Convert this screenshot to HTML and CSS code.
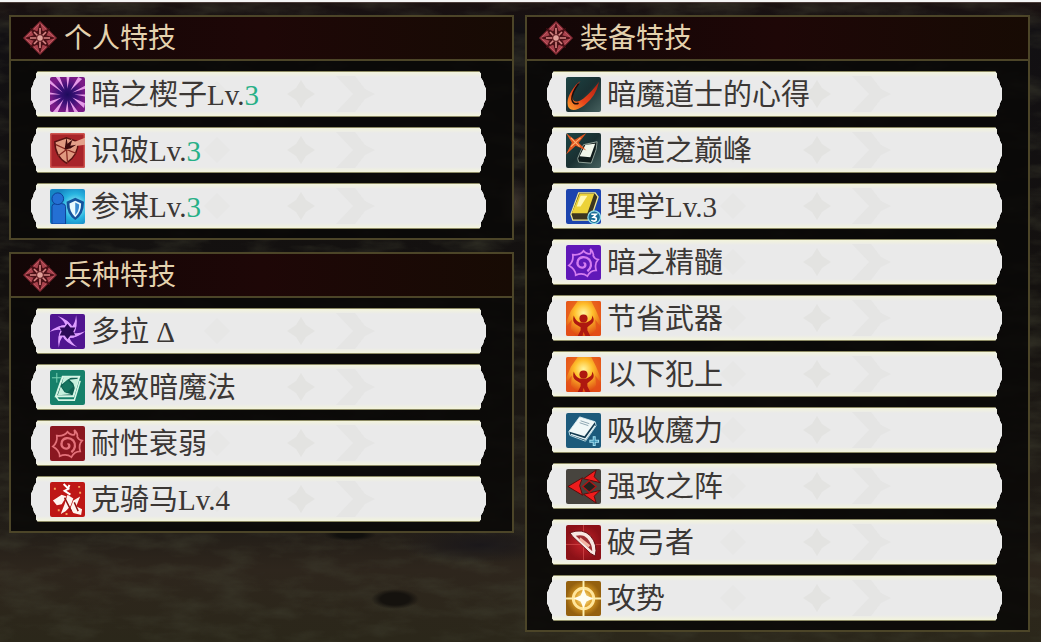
FILE: index.html
```html
<!DOCTYPE html>
<html lang="zh-CN">
<head>
    <meta charset="UTF-8">
    <meta name="viewport" content="width=device-width, initial-scale=1.0">
    <title>特技</title>
    <link rel="stylesheet" href="styles.css">
</head>
<body>

<!-- shared icons -->
<svg class="sprite" aria-hidden="true">
    <defs>
        <radialGradient id="g-fire" cx="50%" cy="35%" r="65%">
            <stop offset="0" stop-color="#fff6a0"/>
            <stop offset="0.4" stop-color="#ffc02c"/>
            <stop offset="1" stop-color="#df4a12"/>
        </radialGradient>
        <radialGradient id="g-burst">
            <stop offset="0" stop-color="#1d0c5c"/>
            <stop offset="0.5" stop-color="#3c1178"/>
            <stop offset="1" stop-color="#7a1a86"/>
        </radialGradient>
        <linearGradient id="g-slash" x1="1" y1="0" x2="0" y2="1">
            <stop offset="0" stop-color="#a81d12"/>
            <stop offset="0.6" stop-color="#e8431a"/>
            <stop offset="1" stop-color="#ffa52e"/>
        </linearGradient>
        <radialGradient id="g-gold">
            <stop offset="0" stop-color="#fff3b0"/>
            <stop offset="0.5" stop-color="#d99a22"/>
            <stop offset="1" stop-color="#94600f"/>
        </radialGradient>
        <linearGradient id="g-teal" x1="0" y1="0" x2="1" y2="1">
            <stop offset="0" stop-color="#1c4444"/>
            <stop offset="0.5" stop-color="#1a3032"/>
            <stop offset="1" stop-color="#46605e"/>
        </linearGradient>
        <radialGradient id="g-aura" cx="72%" cy="50%" r="60%">
            <stop offset="0" stop-color="#b8fbff"/>
            <stop offset="0.6" stop-color="#28b4e0"/>
            <stop offset="1" stop-color="#1586c4"/>
        </radialGradient>
        <radialGradient id="g-red">
            <stop offset="0" stop-color="#c8242c"/>
            <stop offset="1" stop-color="#8c1218"/>
        </radialGradient>
    </defs>
    <symbol id="emblem" viewBox="0 0 34 34">
        <path d="M17 0 34 17 17 34 0 17Z" fill="#8a2c36"/>
        <path d="M17 2 32 17 17 32 2 17Z" fill="#a8424c" stroke="#bd5862"/>
        <path d="M17 5 19 12 25 9 22 15 29 17 22 19 25 25 19 22 17 29 15 22 9 25 12 19 5 17 12 15 9 9 15 12Z" fill="#4a1016" stroke="#4a1016" stroke-width="2"/>
        <path d="M17 7v20M7 17h20M11 11l12 12M23 11 11 23" stroke="#d88684" stroke-width="1.6"/>
        <circle cx="17" cy="17" r="3.4" fill="#e2a09a" stroke="#5c161c"/>
    </symbol>
    <symbol id="fire" viewBox="0 0 36 36">
        <path d="M0 0h36v36H0z" fill="url(#g-fire)"/>
        <path d="M0 0h12L5 10 0 22ZM36 0H26l5 10 5 12ZM0 36V27l6-8-1 10 5 7ZM36 36V27l-6-8 1 10-5 7Z" fill="#e4501a" opacity=".75"/>
        <path d="M8 15Q6 21 10 24L15 27V30L12 36H17L18 32 20 36H25L22 30V27L27 23Q30 20 27 15 27 20 23 21L21 22H14Q10 21 8 15Z" fill="#ae1810"/>
        <circle cx="18" cy="18" r="4.2" fill="#ae1810"/>
    </symbol>
    <symbol id="spiral" viewBox="0 0 36 36">
        <path d="M18 6Q21 10 25 9 26 7 25 4 29 8 28 11 29 14 33 15 29 19 31 26 25 26 22 32 17 28 10 31 10 25 3 21 8 17 7 10 14 11 18 6Z" fill="none" stroke="currentColor" stroke-width="1.8"/>
        <path d="M18 19c2-1 3 3 0 4-4 1-7-2-6-6 1-5 8-6 12-2 3 4 2 9-2 12" fill="none" stroke="currentColor" stroke-width="2.4"/>
    </symbol>
</svg>

<main class="skills">
    <div class="column">
        <section class="panel">
            <h2 class="panel-title"><svg class="emblem"><use href="#emblem"/></svg><span>个人特技</span></h2>
            <ul class="skill-list">
                <li class="skill">
                    <svg class="icon" viewBox="0 0 36 36">
                        <path d="M0 0h36v36H0z" fill="url(#g-burst)"/>
                        <path d="M18 12 17 0h3ZM21 14 29 0l4 2ZM23 16 36 9v3ZM25 18 36 18v2ZM23 21 36 27l-1 5ZM20 24 29 36h-4ZM18 24 19 36h-3ZM14 23 8 36H3ZM12 21 0 29v-4ZM11 18 0 18v-2ZM13 16 0 7V3ZM15 13 6 0h4Z" fill="#e69be8"/>
                    </svg>
                    <span>暗之楔子Lv.<em>3</em></span>
                </li>
                <li class="skill">
                    <svg class="icon" viewBox="0 0 36 36">
                        <path d="M0 0h36v36H0z" fill="#a8242a"/>
                        <path d="M0 0h36v36H0z" fill="none" stroke="#cf5550" stroke-width="3"/>
                        <path d="M17 5 29 9Q29 23 17 31 5 24 5 9Z" fill="#e09a80" stroke="#5a1212" stroke-width="1.5"/>
                        <path d="M17 17 6 12M17 17 8 24M17 17 18 31M17 17 27 21" stroke="#84271f" stroke-width="1.3"/>
                        <path d="M36 5 23 10 22 6 17 17 24 16 23 14 36 12Z" fill="#e4a08a"/>
                        <path d="M17 4 15 17 21 16 27 12 21 13 23 7 18 11Z" fill="#3c0a0c"/>
                    </svg>
                    <span>识破Lv.<em>3</em></span>
                </li>
                <li class="skill">
                    <svg class="icon" viewBox="0 0 36 36">
                        <path d="M0 0h36v36H0z" fill="url(#g-aura)"/>
                        <path d="M2 36V18q0-3 4-3h6q4 0 4 3v18Z" fill="#2470d4" stroke="#0d3f94"/>
                        <circle cx="8" cy="10" r="6" fill="#2470d4" stroke="#0d3f94"/>
                        <path d="M26 9 35 13Q35 26 26 32 17 26 17 13Z" fill="#14539c"/>
                        <path d="M26 12 32 15Q32 24 26 29 20 24 20 15Z" fill="#e8fbff"/>
                        <path d="M26 14 30 16Q30 23 26 27Z" fill="#3a8cd2"/>
                    </svg>
                    <span>参谋Lv.<em>3</em></span>
                </li>
            </ul>
        </section>

        <section class="panel">
            <h2 class="panel-title"><svg class="emblem"><use href="#emblem"/></svg><span>兵种特技</span></h2>
            <ul class="skill-list">
                <li class="skill">
                    <svg class="icon" viewBox="0 0 36 36">
                        <path d="M0 0h36v36H0z" fill="#501590"/>
                        <g fill="#dd9dff">
                            <path id="blade" d="M24 15Q20 6 8 2 15 7 16 12 10 11 5 16 13 13 19 16Z"/>
                            <use href="#blade" transform="rotate(60 18 18)"/>
                            <use href="#blade" transform="rotate(120 18 18)"/>
                            <use href="#blade" transform="rotate(180 18 18)"/>
                            <use href="#blade" transform="rotate(240 18 18)"/>
                            <use href="#blade" transform="rotate(300 18 18)"/>
                        </g>
                        <path d="M18 10 21 14 26 14 24 18 26 22 21 22 18 26 15 22 10 22 12 18 10 14 15 14Z" fill="#2c0a58"/>
                    </svg>
                    <span>多拉 Δ</span>
                </li>
                <li class="skill">
                    <svg class="icon" viewBox="0 0 36 36">
                        <path d="M0 0h36v36H0z" fill="#16806a"/>
                        <path d="M13 7 30 7 24 27 6 27Z" fill="#0f5f50" stroke="#d8f6e6" stroke-width="2"/>
                        <path d="M6 27 9 31 25 31 31 11" fill="none" stroke="#d8f6e6" stroke-width="1.6"/>
                        <path d="M14 7 23 7 18 10 12 15ZM29 9 26 20 24 14 20 10ZM8 26 11 17 15 23 22 25Z" fill="#c6f0dd"/>
                        <path d="M18 10 24 17 17 24 12 17Z" fill="#16745f"/>
                        <path d="M7 3v10M2 8h10" stroke="#7fd6b8"/>
                    </svg>
                    <span>极致暗魔法</span>
                </li>
                <li class="skill">
                    <svg class="icon icon-rose" viewBox="0 0 36 36">
                        <path d="M0 0h36v36H0z" fill="#8a1720"/>
                        <use href="#spiral"/>
                    </svg>
                    <span>耐性衰弱</span>
                </li>
                <li class="skill">
                    <svg class="icon" viewBox="0 0 36 36">
                        <path d="M0 0h36v36H0z" fill="#be1716"/>
                        <path d="M3 19 12 13 17 15 12 23 7 24ZM18 13 24 17 21 25 16 30 11 33 15 23ZM24 19 31 15 27 25 33 28 32 34 24 32 21 27Z" fill="#fff4ee"/>
                        <path d="M14 2 19 7 15 9 21 13M20 3 18 8" fill="none" stroke="#fff" stroke-width="2"/>
                        <path d="M15 16 22 30M25 21 29 30" stroke="#8d100e" stroke-width="1.5"/>
                        <path d="M4 7h2M29 5h2M8 29h2M16 33h2M30 11h2" stroke="#f6a25c" stroke-width="2"/>
                    </svg>
                    <span>克骑马Lv.4</span>
                </li>
            </ul>
        </section>
    </div>

    <div class="column">
        <section class="panel">
            <h2 class="panel-title"><svg class="emblem"><use href="#emblem"/></svg><span>装备特技</span></h2>
            <ul class="skill-list">
                <li class="skill">
                    <svg class="icon" viewBox="0 0 36 36">
                        <path d="M0 0h36v36H0z" fill="url(#g-teal)"/>
                        <path d="M15 4Q6 14 7 23 9 28 18 22 27 15 34 5 31 20 19 29 8 37 3 32-1 25 6 14 10 7 15 4Z" fill="url(#g-slash)"/>
                        <path d="M13 7Q6 16 6 23 7 29 13 27" fill="none" stroke="#1a0d0a" stroke-width="1.5"/>
                    </svg>
                    <span>暗魔道士的心得</span>
                </li>
                <li class="skill">
                    <svg class="icon" viewBox="0 0 36 36">
                        <path d="M0 0h36v36H0z" fill="url(#g-teal)"/>
                        <path d="M18 12 32 9 31 17 26 31 13 30 12 26Z" fill="#101c1c" stroke="#93a39b"/>
                        <path d="M20 12 30 11 25 25 14 24Z" fill="#f0f6ea"/>
                        <path d="M0 0 9 7 21 0 13 10 21 18 10 13 0 22 6 10Z" fill="#e25620"/>
                        <path d="M5 5 14 14M15 5 5 14" stroke="#ffb070" stroke-width="1.2"/>
                    </svg>
                    <span>魔道之巅峰</span>
                </li>
                <li class="skill">
                    <svg class="icon" viewBox="0 0 36 36">
                        <path d="M0 0h36v36H0z" fill="#1c44ae"/>
                        <path d="M13 4 30 4 33 8 25 32 7 32 5 26Z" fill="#3c3620" stroke="#f2e890" stroke-width="1.3"/>
                        <path d="M14 5 29 5 22 25 6 25Z" fill="#ecd238"/>
                        <path d="M15 7 22 7 15 18 11 18Z" fill="#fff8b4"/>
                        <circle cx="29" cy="29" r="6.5" fill="#1c6e96" stroke="#92ddec" stroke-width="1.3"/>
                        <path d="M26 26h5l-3 3q4 0 3 3-2 2-5 0" fill="none" stroke="#fff" stroke-width="1.7"/>
                    </svg>
                    <span>理学Lv.3</span>
                </li>
                <li class="skill">
                    <svg class="icon icon-violet" viewBox="0 0 36 36">
                        <path d="M0 0h36v36H0z" fill="#6018b8"/>
                        <use href="#spiral"/>
                    </svg>
                    <span>暗之精髓</span>
                </li>
                <li class="skill">
                    <svg class="icon"><use href="#fire"/></svg>
                    <span>节省武器</span>
                </li>
                <li class="skill">
                    <svg class="icon"><use href="#fire"/></svg>
                    <span>以下犯上</span>
                </li>
                <li class="skill">
                    <svg class="icon" viewBox="0 0 36 36">
                        <path d="M0 0h36v36H0z" fill="#1c5a7c"/>
                        <path d="M14 4 30 9 31 13 20 29 4 23 3 19Z" fill="#123a50" stroke="#b9dce6"/>
                        <path d="M14 4 30 9 19 24 3 19Z" fill="#f0f8f8"/>
                        <path d="M5 22 20 27 30 13" fill="none" stroke="#e2f2f6" stroke-width="1.5"/>
                        <path d="M15 8 24 11M14 10 23 13" stroke="#8ba4b0"/>
                        <path d="M29 24v10M24 29h10" stroke="#a6e2f4" stroke-width="3"/>
                        <path d="M29 25v8M25 29h8" stroke="#2d86aa"/>
                    </svg>
                    <span>吸收魔力</span>
                </li>
                <li class="skill">
                    <svg class="icon" viewBox="0 0 36 36">
                        <path d="M0 0h36v36H0z" fill="#47443e"/>
                        <path d="M2 18 17 9 14 17 17 27ZM18 10 31 1 29 8 35 14ZM18 26 35 22 29 28 31 35Z" fill="#ee1c1c" stroke="#5e0a0a"/>
                        <path d="M24 12 31 18 24 24 17 18Z" fill="#24211d" stroke="#b01414" stroke-width="1.3"/>
                    </svg>
                    <span>强攻之阵</span>
                </li>
                <li class="skill">
                    <svg class="icon" viewBox="0 0 36 36">
                        <path d="M0 0h36v36H0z" fill="url(#g-red)"/>
                        <path d="M18 0v36M0 20h36" stroke="#e05a58" opacity=".6"/>
                        <path d="M4 8Q17 3 25 11 33 20 30 32L25 29 7 12Z" fill="#f8e8e2" stroke="#651015"/>
                        <path d="M10 11Q18 9 22 14 27 20 27 27Z" fill="#9c3034"/>
                        <path d="M14 14 24 22" stroke="#f4b6a4" stroke-width="3"/>
                    </svg>
                    <span>破弓者</span>
                </li>
                <li class="skill">
                    <svg class="icon" viewBox="0 0 36 36">
                        <path d="M0 0h36v36H0z" fill="url(#g-gold)"/>
                        <circle cx="18" cy="18" r="10.5" fill="none" stroke="#ffe59a" stroke-width="3"/>
                        <path d="M18 0v36M0 18h36" stroke="#ffefae" stroke-width="2"/>
                        <path d="M18 8 21 15 28 18 21 21 18 28 15 21 8 18 15 15Z" fill="#fffdf0"/>
                    </svg>
                    <span>攻势</span>
                </li>
            </ul>
        </section>
    </div>
</main>

</body>
</html>
```
FILE: styles.css
```css
* {
    box-sizing: border-box;
}
body {
    margin: 0;
    min-height: 100vh;
    border-top: 2px solid #f4f4f4;
    color: #3b3735;
    font-family: "Liberation Serif", "Noto Sans CJK SC", serif;
    background-color: #12100f;
    /* stones and shadows on the ground, then the ground itself */
    background-image:
        linear-gradient(#4a3c38, #4a3c38),
        radial-gradient(ellipse 24px 10px at 395px 599px, #15120e 60%, transparent),
        radial-gradient(ellipse 26px 6px at 350px 535px, #11100d 50%, transparent),
        radial-gradient(ellipse 80px 18px at 480px 545px, #1a171a, transparent),
        radial-gradient(ellipse 17px 26px at 515px 202px, #3c342e, transparent),
        url("data:image/svg+xml,%3Csvg xmlns='http://www.w3.org/2000/svg' width='600' height='642'%3E%3Cfilter id='n'%3E%3CfeTurbulence type='fractalNoise' baseFrequency='.02 .06' numOctaves='4' seed='6'/%3E%3CfeColorMatrix values='0 0 0 0 .05 0 0 0 0 .05 0 0 0 0 .03 1.1 0 0 0 -.45'/%3E%3C/filter%3E%3Crect width='600' height='642' filter='url(%23n)'/%3E%3C/svg%3E"),
        linear-gradient(#1c1110 0, #121013 30px, #14110f 300px, #231e18 530px, #2e261d 570px, #2b271a 100%);
    background-size: 100% 2px, auto, auto, auto, auto, auto, auto;
    background-position: 0 1px, 0 0, 0 0, 0 0, 0 0, 0 0, 0 0;
    background-repeat: no-repeat, no-repeat, no-repeat, no-repeat, no-repeat, repeat-x, no-repeat;
}
.sprite {
    position: absolute;
    width: 0;
    height: 0;
}
.skills {
    display: grid;
    grid-template-columns: 1fr 1fr;
    gap: 11px;
    padding: 13px 11px 9px 9px;
}
.column {
    display: flex;
    flex-direction: column;
    gap: 12px;
}
.panel {
    border: 2px solid #4c4528;
    background-color: rgba(9, 8, 7, 0.88);
}
.panel-title {
    display: flex;
    align-items: center;
    gap: 7px;
    height: 44px;
    margin: 0;
    padding-left: 12px;
    border-bottom: 2px solid #4c4528;
    background: linear-gradient(90deg, #120606, #1e0707 50%, #170b04);
    color: #e4d2ae;
    font-size: 28px;
    font-weight: normal;
    line-height: 40px;
}
.panel-title span, .skill span {
    padding-top: 2px;
}
.emblem {
    width: 34px;
    height: 34px;
}
.skill-list {
    display: flex;
    flex-direction: column;
    gap: 10px;
    margin: 0;
    padding: 10px 26px 9px 20px;
    list-style: none;
}
.skill {
    display: flex;
    align-items: center;
    gap: 6px;
    height: 46px;
    padding-left: 19px;
    border: solid #8c8a64;
    border-width: 1px 0;
    background-color: #eaeaea;
    /* pale diamonds and chevron over a cream edge */
    background-image:
        url("data:image/svg+xml,%3Csvg xmlns='http://www.w3.org/2000/svg' width='200' height='44' fill='%23e3e3e1'%3E%3Cpath d='M26 9 39 22 26 35 13 22Z' opacity='.4'/%3E%3Cpath d='M110 8 115 16 124 22 115 28 110 36 105 28 96 22 105 16Z'/%3E%3Cpath d='M145 4H164L174 17 184 22 174 27 164 40H145L162 22Z' opacity='.7'/%3E%3C/svg%3E"),
        linear-gradient(#f3f4dc, #eaeaea 5px, #eaeaea 39px, #f3f4dc),
        linear-gradient(90deg, #e2e2d4, #eaeaea 20px);
    background-repeat: no-repeat;
    background-position: 160px 0, 0 0, 0 0;
    font-size: 29px;
    line-height: 40px;
    white-space: nowrap;
    /* torn paper ends */
    clip-path: polygon(
        7px 0, calc(100% - 7px) 0, calc(100% - 5px) 3px, calc(100% - 5px) 7px,
        calc(100% - 3px) 10px, calc(100% - 2px) 14px, 100% 18px, 100% 28px,
        calc(100% - 2px) 32px, calc(100% - 3px) 36px, calc(100% - 5px) 39px,
        calc(100% - 5px) 43px, calc(100% - 7px) 100%,
        7px 100%, 5px 43px, 5px 39px, 3px 36px, 2px 32px, 0 28px,
        0 18px, 2px 14px, 3px 10px, 5px 7px, 5px 3px
    );
}
.skill em {
    color: #27b087;
    font-style: normal;
}
.icon {
    flex: none;
    width: 35px;
    height: 35px;
    border-radius: 2px;
}
.icon-rose {
    color: #e4727a;
}
.icon-violet {
    color: #d47cf0;
}
```
